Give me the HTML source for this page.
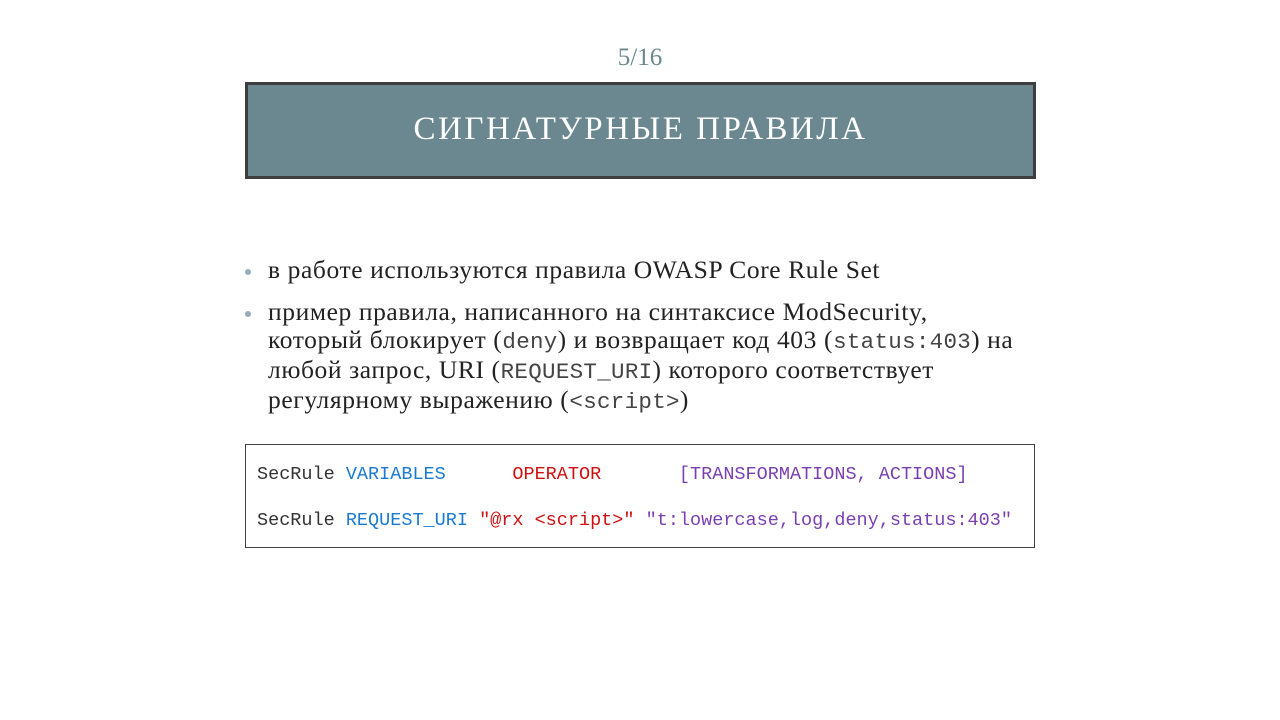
<!DOCTYPE html>
<html><head><meta charset="utf-8"><style>
body{margin:0;width:1280px;height:720px;background:#fff;position:relative;font-family:"Liberation Serif",serif;overflow:hidden}
.num{position:absolute;top:44px;left:0;width:1280px;text-align:center;color:#6b8890;font-size:25px}
.title{position:absolute;left:245px;top:82px;width:785px;height:91px;border:3px solid #3d3d3d;background:#6b8890;color:#fff;font-size:33px;letter-spacing:2.5px;text-align:center;line-height:88px}
ul{position:absolute;left:245px;top:256px;width:820px;margin:0;padding:0;list-style:none;font-size:25.5px;letter-spacing:0.6px;color:#222;line-height:28px;white-space:nowrap}
li{position:relative;padding-left:23px;margin-bottom:14px}
li:before{content:"";position:absolute;left:0;top:13px;width:6px;height:6px;border-radius:50%;background:#9aabbb}
code{font-family:"Liberation Mono",monospace;font-size:22.5px;letter-spacing:0.3px;color:#444}
.code{position:absolute;left:245px;top:444px;width:788px;height:102px;border:1px solid #444;font-family:"Liberation Mono",monospace;font-size:18.5px;color:#333;white-space:pre}
.l{position:absolute;left:11px}
.b{color:#1a7bd1}.r{color:#d01010}.p{color:#7a3fb0}
</style></head><body>
<div class="num">5/16</div>
<div class="title">СИГНАТУРНЫЕ ПРАВИЛА</div>
<ul>
<li>в работе используются правила OWASP Core Rule Set</li>
<li>пример правила, написанного на синтаксисе ModSecurity,<br>который блокирует (<code>deny</code>) и возвращает код 403 (<code>status:403</code>) на<br>любой запрос, URI (<code>REQUEST_URI</code>) которого соответствует<br>регулярному выражению (<code>&lt;script&gt;</code>)</li>
</ul>
<div class="code"><div class="l" style="top:19px">SecRule <span class="b">VARIABLES</span>      <span class="r">OPERATOR</span>       <span class="p">[TRANSFORMATIONS, ACTIONS]</span></div><div class="l" style="top:65px">SecRule <span class="b">REQUEST_URI</span> <span class="r">"@rx &lt;script&gt;"</span> <span class="p">"t:lowercase,log,deny,status:403"</span></div></div>
</body></html>
